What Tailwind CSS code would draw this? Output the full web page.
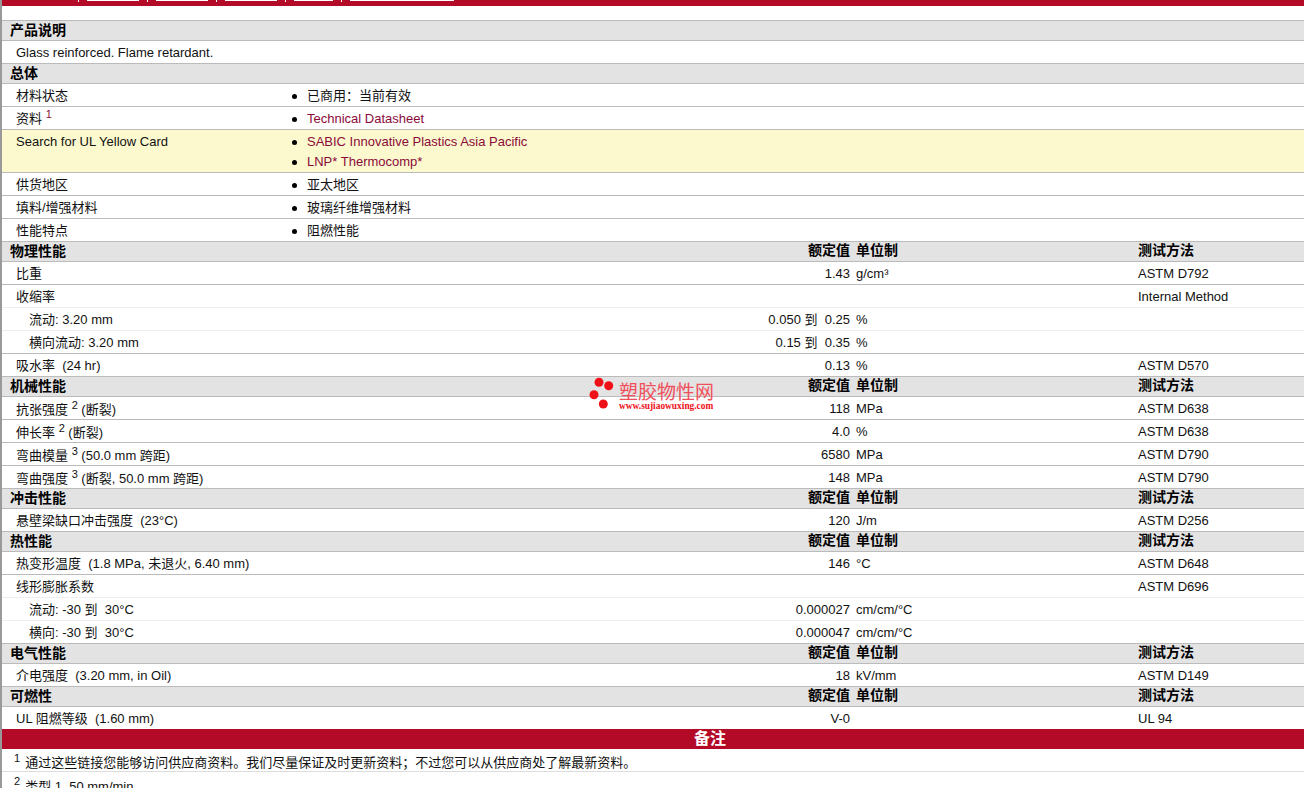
<!DOCTYPE html>
<html lang="en">
<head>
  <meta charset="UTF-8" />
  <title>LNP Thermocomp</title>
  <script src="https://cdn.jsdelivr.net/npm/@tailwindcss/browser@4"></script>
</head>
<body class="bg-white text-[13px] text-[#111] font-['Liberation_Sans','Noto_Sans_CJK_SC',sans-serif] overflow-hidden h-[788px]">
<div class="relative h-[788px] overflow-hidden border-l-2 border-[#999]">

  <!-- top bar -->
  <div class="h-[6px] bg-[#b30a27] flex items-start">
    <div class="ml-[76px] h-[2px] w-[1px] bg-white"></div>
    <div class="ml-[8px] h-[1px] w-[52px] bg-white"></div>
    <div class="ml-[8px] h-[2px] w-[1px] bg-white"></div>
    <div class="ml-[8px] h-[1px] w-[52px] bg-white"></div>
    <div class="ml-[8px] h-[2px] w-[1px] bg-white"></div>
    <div class="ml-[8px] h-[1px] w-[52px] bg-white"></div>
    <div class="ml-[8px] h-[2px] w-[1px] bg-white"></div>
    <div class="ml-[8px] h-[1px] w-[39px] bg-white"></div>
    <div class="ml-[8px] h-[2px] w-[1px] bg-white"></div>
    <div class="ml-[8px] h-[1px] w-[104px] bg-white"></div>
  </div>
  <div class="h-[14px]"></div>

  <div class="h-[21px] flex items-center bg-[#e3e3e3] border-y border-[#bbb] pl-[8px] font-bold text-[14px] text-black">产品说明</div>
  <div class="h-[22px] flex items-center pt-[2px] pl-[14px]">Glass reinforced. Flame retardant.</div>
  <div class="h-[21px] flex items-center bg-[#e3e3e3] border-y border-[#bbb] pl-[8px] font-bold text-[14px] text-black">总体</div>

  <div class="h-[23px] flex items-center pt-[2px] border-b border-[#bbb]"><span class="w-[290px] pl-[14px]">材料状态</span><span class="w-[5px] h-[5px] rounded-full bg-black mr-[10px]"></span><span>已商用：当前有效</span></div>
  <div class="h-[23px] flex items-center pt-[2px] border-b border-[#bbb]"><span class="w-[290px] pl-[14px]">资料 <sup class="text-[11px] text-[#8a0a3a]">1</sup></span><span class="w-[5px] h-[5px] rounded-full bg-black mr-[10px]"></span><span class="text-[#8a0a3a]">Technical Datasheet</span></div>
  <div class="h-[43px] flex bg-[#fdf9cf] border-b border-[#bbb] pt-[2px]">
    <span class="w-[290px] pl-[14px] leading-[20px]">Search for UL Yellow Card</span>
    <div class="flex flex-col">
      <div class="flex items-center h-[20px]"><span class="w-[5px] h-[5px] rounded-full bg-black mr-[10px]"></span><span class="text-[#8a0a3a]">SABIC Innovative Plastics Asia Pacific</span></div>
      <div class="flex items-center h-[20px]"><span class="w-[5px] h-[5px] rounded-full bg-black mr-[10px]"></span><span class="text-[#8a0a3a]">LNP* Thermocomp*</span></div>
    </div>
  </div>
  <div class="h-[23px] flex items-center pt-[2px] border-b border-[#bbb]"><span class="w-[290px] pl-[14px]">供货地区</span><span class="w-[5px] h-[5px] rounded-full bg-black mr-[10px]"></span><span>亚太地区</span></div>
  <div class="h-[23px] flex items-center pt-[2px] border-b border-[#bbb]"><span class="w-[290px] pl-[14px]">填料/增强材料</span><span class="w-[5px] h-[5px] rounded-full bg-black mr-[10px]"></span><span>玻璃纤维增强材料</span></div>
  <div class="h-[22px] flex items-center pt-[2px]"><span class="w-[290px] pl-[14px]">性能特点</span><span class="w-[5px] h-[5px] rounded-full bg-black mr-[10px]"></span><span>阻燃性能</span></div>

  <!-- 物理性能 -->
  <div class="h-[21px] flex items-center bg-[#e3e3e3] border-y border-[#bbb] font-bold text-[14px] text-black"><span class="w-[598px] pl-[8px]">物理性能</span><span class="w-[250px] pb-[2px] text-right">额定值</span><span class="w-[288px] pb-[2px] pl-[6px]">单位制</span><span class="pb-[2px]">测试方法</span></div>
  <div class="h-[23px] flex items-center pt-[2px] border-b border-[#bbb]"><span class="w-[598px] pl-[14px]">比重</span><span class="w-[250px] text-right">1.43</span><span class="w-[288px] pl-[6px]">g/cm³</span><span>ASTM D792</span></div>
  <div class="h-[23px] flex items-center pt-[2px] border-b border-[#eee]"><span class="w-[598px] pl-[14px]">收缩率</span><span class="w-[250px]"></span><span class="w-[288px]"></span><span>Internal Method</span></div>
  <div class="h-[23px] flex items-center pt-[2px] border-b border-[#eee]"><span class="w-[598px] pl-[27px]">流动: 3.20 mm</span><span class="w-[250px] text-right">0.050 到&nbsp; 0.25</span><span class="w-[288px] pl-[6px]">%</span></div>
  <div class="h-[23px] flex items-center pt-[2px] border-b border-[#bbb]"><span class="w-[598px] pl-[27px]">横向流动: 3.20 mm</span><span class="w-[250px] text-right">0.15 到&nbsp; 0.35</span><span class="w-[288px] pl-[6px]">%</span></div>
  <div class="h-[22px] flex items-center pt-[2px]"><span class="w-[598px] pl-[14px]">吸水率&nbsp; (24 hr)</span><span class="w-[250px] text-right">0.13</span><span class="w-[288px] pl-[6px]">%</span><span>ASTM D570</span></div>

  <!-- 机械性能 -->
  <div class="h-[21px] flex items-center bg-[#e3e3e3] border-y border-[#bbb] font-bold text-[14px] text-black"><span class="w-[598px] pl-[8px]">机械性能</span><span class="w-[250px] pb-[2px] text-right">额定值</span><span class="w-[288px] pb-[2px] pl-[6px]">单位制</span><span class="pb-[2px]">测试方法</span></div>
  <div class="h-[23px] flex items-center pt-[2px] border-b border-[#bbb]"><span class="w-[598px] pl-[14px] pt-[2px]">抗张强度 <sup class="text-[11px]">2</sup> (断裂)</span><span class="w-[250px] text-right">118</span><span class="w-[288px] pl-[6px]">MPa</span><span>ASTM D638</span></div>
  <div class="h-[23px] flex items-center pt-[2px] border-b border-[#bbb]"><span class="w-[598px] pl-[14px] pt-[2px]">伸长率 <sup class="text-[11px]">2</sup> (断裂)</span><span class="w-[250px] text-right">4.0</span><span class="w-[288px] pl-[6px]">%</span><span>ASTM D638</span></div>
  <div class="h-[23px] flex items-center pt-[2px] border-b border-[#bbb]"><span class="w-[598px] pl-[14px] pt-[2px]">弯曲模量 <sup class="text-[11px]">3</sup> (50.0 mm 跨距)</span><span class="w-[250px] text-right">6580</span><span class="w-[288px] pl-[6px]">MPa</span><span>ASTM D790</span></div>
  <div class="h-[22px] flex items-center pt-[2px]"><span class="w-[598px] pl-[14px] pt-[2px]">弯曲强度 <sup class="text-[11px]">3</sup> (断裂, 50.0 mm 跨距)</span><span class="w-[250px] text-right">148</span><span class="w-[288px] pl-[6px]">MPa</span><span>ASTM D790</span></div>

  <!-- 冲击性能 -->
  <div class="h-[21px] flex items-center bg-[#e3e3e3] border-y border-[#bbb] font-bold text-[14px] text-black"><span class="w-[598px] pl-[8px]">冲击性能</span><span class="w-[250px] pb-[2px] text-right">额定值</span><span class="w-[288px] pb-[2px] pl-[6px]">单位制</span><span class="pb-[2px]">测试方法</span></div>
  <div class="h-[22px] flex items-center pt-[2px]"><span class="w-[598px] pl-[14px]">悬壁梁缺口冲击强度&nbsp; (23°C)</span><span class="w-[250px] text-right">120</span><span class="w-[288px] pl-[6px]">J/m</span><span>ASTM D256</span></div>

  <!-- 热性能 -->
  <div class="h-[21px] flex items-center bg-[#e3e3e3] border-y border-[#bbb] font-bold text-[14px] text-black"><span class="w-[598px] pl-[8px]">热性能</span><span class="w-[250px] pb-[2px] text-right">额定值</span><span class="w-[288px] pb-[2px] pl-[6px]">单位制</span><span class="pb-[2px]">测试方法</span></div>
  <div class="h-[23px] flex items-center pt-[2px] border-b border-[#bbb]"><span class="w-[598px] pl-[14px]">热变形温度&nbsp; (1.8 MPa, 未退火, 6.40 mm)</span><span class="w-[250px] text-right">146</span><span class="w-[288px] pl-[6px]">°C</span><span>ASTM D648</span></div>
  <div class="h-[23px] flex items-center pt-[2px] border-b border-[#eee]"><span class="w-[598px] pl-[14px]">线形膨胀系数</span><span class="w-[250px]"></span><span class="w-[288px]"></span><span>ASTM D696</span></div>
  <div class="h-[23px] flex items-center pt-[2px] border-b border-[#eee]"><span class="w-[598px] pl-[27px]">流动: -30 到&nbsp; 30°C</span><span class="w-[250px] text-right">0.000027</span><span class="w-[288px] pl-[6px]">cm/cm/°C</span></div>
  <div class="h-[22px] flex items-center pt-[2px]"><span class="w-[598px] pl-[27px]">横向: -30 到&nbsp; 30°C</span><span class="w-[250px] text-right">0.000047</span><span class="w-[288px] pl-[6px]">cm/cm/°C</span></div>

  <!-- 电气性能 -->
  <div class="h-[21px] flex items-center bg-[#e3e3e3] border-y border-[#bbb] font-bold text-[14px] text-black"><span class="w-[598px] pl-[8px]">电气性能</span><span class="w-[250px] pb-[2px] text-right">额定值</span><span class="w-[288px] pb-[2px] pl-[6px]">单位制</span><span class="pb-[2px]">测试方法</span></div>
  <div class="h-[22px] flex items-center pt-[2px]"><span class="w-[598px] pl-[14px]">介电强度&nbsp; (3.20 mm, in Oil)</span><span class="w-[250px] text-right">18</span><span class="w-[288px] pl-[6px]">kV/mm</span><span>ASTM D149</span></div>

  <!-- 可燃性 -->
  <div class="h-[21px] flex items-center bg-[#e3e3e3] border-y border-[#bbb] font-bold text-[14px] text-black"><span class="w-[598px] pl-[8px]">可燃性</span><span class="w-[250px] pb-[2px] text-right">额定值</span><span class="w-[288px] pb-[2px] pl-[6px]">单位制</span><span class="pb-[2px]">测试方法</span></div>
  <div class="h-[22px] flex items-center pt-[2px]"><span class="w-[598px] pl-[14px]">UL 阻燃等级&nbsp; (1.60 mm)</span><span class="w-[250px] text-right">V-0</span><span class="w-[288px] pl-[6px]"></span><span>UL 94</span></div>

  <!-- 备注 -->
  <div class="h-[20px] flex items-center justify-center bg-[#b30a27] text-white font-bold text-[16px] pl-[114px]">备注</div>
  <div class="h-[23px] flex items-center pt-[6px] border-b border-[#ddd] pl-[12px]"><sup class="text-[11px] mr-[5px]">1</sup><span>通过这些链接您能够访问供应商资料。我们尽量保证及时更新资料；不过您可以从供应商处了解最新资料。</span></div>
  <div class="h-[23px] flex items-center pt-[6px] pl-[12px]"><sup class="text-[11px] mr-[5px]">2</sup><span>类型 1, 50 mm/min</span></div>

  <!-- watermark -->
  <div class="absolute left-[586px] top-[376px] w-[130px] h-[36px]">
    <svg class="absolute left-0 top-0" width="30" height="36" viewBox="0 0 30 36">
      <circle cx="11" cy="6.3" r="4.5" fill="#f01018"/>
      <circle cx="20.7" cy="9.7" r="4.5" fill="#f01018"/>
      <circle cx="6" cy="18.7" r="4.5" fill="#f01018"/>
      <circle cx="15.3" cy="28" r="4.5" fill="#f01018"/>
    </svg>
    <div class="absolute left-[31px] top-[5px] text-[19px] leading-[20px] text-[#f0505c] whitespace-nowrap font-['Noto_Sans_CJK_SC',sans-serif]">塑胶物性网</div>
    <div class="absolute left-[31px] top-[25px] text-[9.4px] leading-[10px] text-[#f01018] whitespace-nowrap font-['Liberation_Serif',serif] font-bold">www.sujiaowuxing.com</div>
  </div>
</div>
</body>
</html>
